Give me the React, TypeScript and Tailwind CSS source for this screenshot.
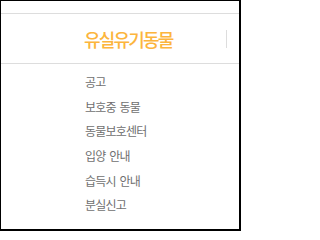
const items = ["공고", "보호중 동물", "동물보호센터", "입양 안내", "습득시 안내", "분실신고"];

const App = () => {
  return (
    <div className="w-[241px] h-[231px] bg-white border-t border-l border-r-2 border-b-2 border-black overflow-hidden font-['Noto_Sans_CJK_KR',sans-serif]">
      <div className="h-[12px]" />
      {/* header */}
      <div className="flex items-center h-[51px] border-t border-b border-[#dddddd]">
        <div className="flex-1 pl-[83px] text-[18px] leading-none font-medium tracking-[-1.8px] text-[#fcb53d]">
          유실유기동물
        </div>
        <div className="w-px h-[18px] bg-[#dddddd] mr-[12px]" />
      </div>
      {/* menu */}
      <ul className="pl-[84px] pt-[6px]">
        {items.map((item) => (
          <li key={item} className="h-[24.6px] flex items-center text-[12px] tracking-[-0.8px] [word-spacing:2px] text-[#707070]">
            {item}
          </li>
        ))}
      </ul>
    </div>
  );
};

export default App;
